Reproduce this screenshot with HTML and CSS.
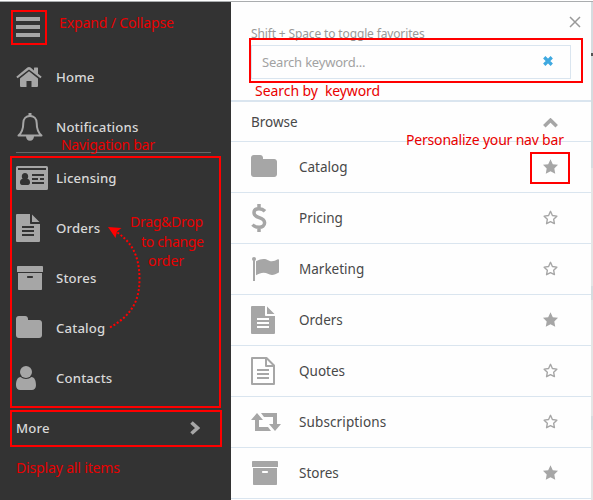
FILE: index.html
```html
<!DOCTYPE html>
<html lang="en">
<head>
<meta charset="utf-8">
<title>Navigation</title>
<link rel="stylesheet" href="styles.css">
</head>
<body>
<svg class="defs" width="0" height="0">
  <symbol id="home" viewBox="0 0 26 20"><path d="M13 4.200 22 11.600V19a1 1 0 0 1-1 1h-5.500v-6h-5v6H5a1 1 0 0 1-1-1v-7.400z"/><path d="M13 0c.7 0 1.100.2 1.600.6L18 3.400V1c0-.3.2-.5.5-.5h3c.3 0 .5.2.5.5v5.700l3.700 3.100-1.300 1.500L13 2.400 1.600 11.300.3 9.800 11.400.6c.5-.4.9-.6 1.600-.6z"/></symbol>
  <symbol id="bell" viewBox="0 0 26 28"><path fill="none" stroke="currentColor" stroke-width="2" stroke-linejoin="round" d="M13 3c-4 0-6.700 3-6.700 7 0 7-1.800 10-4.800 12.500h23c-3-2.500-4.800-5.500-4.800-12.500 0-4-2.700-7-6.700-7z"/><path d="M11.500 0h3v3h-3zM9 23h8c0 2.800-1.600 4.800-4 4.800S9 25.800 9 23z"/></symbol>
  <symbol id="card" viewBox="0 0 32 24"><path fill-rule="evenodd" d="M1.500 0h29A1.500 1.500 0 0 1 32 1.500v21a1.500 1.500 0 0 1-1.500 1.500h-29A1.500 1.500 0 0 1 0 22.500v-21A1.500 1.500 0 0 1 1.500 0zM2 2v2h28V2zM16 8v2h12V8zm0 4v2h6v-2zm8 0v2h4v-2zm-8 4v2h12v-2zM9 7c-2 0-3.200 1.600-3.200 3.400 0 1 .3 1.800.8 2.400C4.800 13 4 14.500 4 16.500 4 18 4.800 19 6 19h6c1.200 0 2-1 2-2.500 0-2-.8-3.500-2.600-3.700.5-.6.8-1.400.8-2.400C12.200 8.600 11 7 9 7z"/></symbol>
  <symbol id="file" viewBox="0 0 24 28"><path fill-rule="evenodd" d="M1 0h13v9c0 .6.4 1 1 1h9v17a1 1 0 0 1-1 1H1a1 1 0 0 1-1-1V1a1 1 0 0 1 1-1zm5 12v2h12v-2zm0 4v2h12v-2zm0 4v2h12v-2zM16 .5 23.500 8H16z"/></symbol>
  <symbol id="file-outline" viewBox="0 0 24 28"><path fill="none" stroke="currentColor" stroke-width="2" stroke-linejoin="round" d="M1 1h14.500L23 8.500V27H1zM15 1v8h8"/><path d="M6 12h12v2H6zM6 16h12v2H6zM6 20h12v2H6z"/></symbol>
  <symbol id="archive" viewBox="0 0 26 24"><path fill-rule="evenodd" d="M.8 0h24.400c.5 0 .8.300.8.800V6H0V.8C0 .3.300 0 .8 0zM1 7h24v16.200c0 .5-.3.800-.8.800H1.800c-.5 0-.8-.3-.8-.8zm10 3c-.6 0-1 .4-1 1s.4 1 1 1h4c.6 0 1-.4 1-1s-.4-1-1-1z"/></symbol>
  <symbol id="folder" viewBox="0 0 26 22"><path d="M26 6.800v12.400c0 1.600-1.200 2.800-2.800 2.800H2.800C1.200 22 0 20.800 0 19.200V2.800C0 1.200 1.200 0 2.800 0h6.400C10.800 0 12 1.200 12 2.800V4h11.200C24.800 4 26 5.200 26 6.800z"/></symbol>
  <symbol id="user" viewBox="0 0 20 24"><circle cx="10" cy="6" r="6"/><path d="M4.600 11C1.200 11.300 0 15 0 19.200 0 22.200 1.800 24 4.200 24h11.600c2.400 0 4.200-1.800 4.200-4.800 0-4.200-1.200-7.900-4.600-8.200C14 12.300 12 13 10 13s-4-.7-5.400-2z"/></symbol>
  <symbol id="dollar" viewBox="0 0 16 28"><path fill="none" stroke="currentColor" stroke-width="3.500" d="M14 7.200C12.300 5.500 10.200 4.700 8 4.700c-3 0-5 1.500-5 4C3 15 13.600 12.300 13.600 18.800c0 2.900-2.300 4.500-5.400 4.500-2.700 0-5-.9-6.700-2.700M8 0v5M8 23v5"/></symbol>
  <symbol id="flag" viewBox="0 0 28 24"><circle cx="3" cy="2" r="2"/><path d="M2 2h2v22H2zM5 4.300C8 2.700 10.300 2 12.500 2c4 0 5.200 2.300 8.300 2.300 2 0 4-1 6-2 .7-.3 1.200 0 1.200.6v12c0 .4-.2.700-.6.900-2 1.100-4.200 2.100-6.400 2.100-3.400 0-4.800-2.200-8.500-2.200-2.500 0-4.700 1-7.500 2.500z"/></symbol>
  <symbol id="retweet" viewBox="0 0 30 18"><path d="M6 0 12 7H8v7h9l3 4H4V7H0zM10 0h16v11h4l-6 7-6-7h4V4h-9z"/></symbol>
  <symbol id="star" viewBox="0 0 26 26"><path d="M13 .3 17 8.900l9 1.200-6.400 6.300 1.600 9L13 21.100l-8.200 4.300 1.600-9L0 10.100l9-1.200z"/></symbol>
  <symbol id="star-o" viewBox="0 0 26 26"><path fill="none" stroke="currentColor" stroke-width="2.400" stroke-linejoin="round" d="M13 2.300 16.300 9.500l7.700 1.200-5.500 5.400 1.300 7.600L13 20.100l-6.800 3.600 1.300-7.600L2 10.700l7.700-1.200z"/></symbol>
</svg>
<div class="app">
  <nav class="sidebar">
    <div class="burger"><i></i><i></i><i></i></div>
    <div class="item"><svg class="w26 h20"><use href="#home"/></svg><span>Home</span></div>
    <div class="item"><svg class="w26 h28 inset"><use href="#bell"/></svg><span>Notifications</span></div>
    <hr>
    <div class="item"><svg class="w32 h24"><use href="#card"/></svg><span>Licensing</span></div>
    <div class="item"><svg class="w24 h28"><use href="#file"/></svg><span>Orders</span></div>
    <div class="item"><svg class="w26 h24 inset"><use href="#archive"/></svg><span>Stores</span></div>
    <div class="item"><svg class="w26 h22 raise"><use href="#folder"/></svg><span>Catalog</span></div>
    <div class="item"><svg class="w20 h24"><use href="#user"/></svg><span>Contacts</span></div>
    <div class="item more"><span>More</span><svg class="next" viewBox="0 0 10 14"><path d="m1.500 1.500 6 5.500-6 5.500"/></svg></div>
  </nav>
  <main class="panel">
    <header class="search">
      <svg class="close" viewBox="0 0 10 10"><path d="m0 0 10 10M10 0 0 10"/></svg>
      <div class="hint">Shift + Space to toggle favorites</div>
      <div class="field"><span>Search keyword...</span><svg class="clear" viewBox="0 0 8 8"><path d="m1 1 6 6M7 1 1 7"/></svg></div>
    </header>
    <div class="browse"><span>Browse</span><svg class="up" viewBox="0 0 15 10"><path d="m1.300 8.200 6.200-6 6.200 6"/></svg></div>
    <div class="row"><div class="pic"><svg class="w26 h22 raise"><use href="#folder"/></svg></div><span>Catalog</span><svg class="star"><use href="#star"/></svg></div>
    <div class="row"><div class="pic"><svg class="w16 h28"><use href="#dollar"/></svg></div><span>Pricing</span><svg class="star"><use href="#star-o"/></svg></div>
    <div class="row"><div class="pic"><svg class="w28 h24"><use href="#flag"/></svg></div><span>Marketing</span><svg class="star"><use href="#star-o"/></svg></div>
    <div class="row"><div class="pic"><svg class="w24 h28"><use href="#file"/></svg></div><span>Orders</span><svg class="star"><use href="#star"/></svg></div>
    <div class="row"><div class="pic"><svg class="w24 h28"><use href="#file-outline"/></svg></div><span>Quotes</span><svg class="star"><use href="#star-o"/></svg></div>
    <div class="row"><div class="pic"><svg class="w30 h18"><use href="#retweet"/></svg></div><span class="wide">Subscriptions</span><svg class="star"><use href="#star-o"/></svg></div>
    <div class="row"><div class="pic"><svg class="w26 h24 inset"><use href="#archive"/></svg></div><span>Stores</span><svg class="star"><use href="#star"/></svg></div>
  </main>
  <div class="edge"></div>
</div>
<svg class="notes" width="593" height="500" viewBox="0 0 593 500">
  <g class="boxes">
    <rect x="12" y="11" width="34" height="33"/>
    <rect x="11" y="157" width="209" height="250"/>
    <rect x="11" y="411" width="210" height="35"/>
    <rect x="250" y="39" width="332" height="43"/>
    <rect x="531" y="153" width="38" height="30"/>
  </g>
  <path class="drag" d="M110 327.500C130 316 139.500 303 139.500 279 139.500 255 131 241 115 231"/>
  <path d="m108 227 13.500 1-4.500 3.500-1.500 6.500z"/>
  <text x="59" y="28" textLength="115">Expand / Collapse</text>
  <text x="61" y="150" textLength="94">Navigation bar</text>
  <text x="130" y="227" textLength="73">Drag&amp;Drop</text>
  <text x="141" y="247" textLength="63">to change</text>
  <text x="148" y="266" textLength="36">order</text>
  <text x="16" y="473" textLength="104">Display all items</text>
  <text x="255" y="96" textLength="63">Search by</text>
  <text x="325" y="96" textLength="55">keyword</text>
  <text x="406" y="145" textLength="158">Personalize your nav bar</text>
</svg>
</body>
</html>
```
FILE: styles.css
```css
* { box-sizing: border-box; }
body { margin: 0; width: 593px; height: 500px; overflow: hidden; background: #fff; font-family: "Noto Sans", "Open Sans", sans-serif; font-size: 13.5px; }
.defs { position: absolute; }
svg { display: block; flex: none; fill: currentColor; }
.app { display: flex; height: 499px; margin-top: 1px; border-top: 1px solid #aaadaf; }
.sidebar { width: 231px; background: #333; color: #a6a6a6; padding: 15px 20px 0 16px; flex: none; }
.burger { display: flex; flex-direction: column; gap: 4px; height: 35px; }
.burger i { width: 24px; height: 4px; background: #a6a6a6; }
.item { display: flex; align-items: center; height: 50px; }
.item span { margin-left: auto; width: 155px; color: #d8d8d8; font-weight: 500; font-size: 13.2px; letter-spacing: .15px; white-space: nowrap; }
.item.more span { margin: 0; }
.more { justify-content: space-between; padding-right: 11px; }
hr { margin: 0; border: 0; height: 1px; background: #666; }
.inset { margin-left: 1px; }
.raise { margin-bottom: 2px; }
.w16 { width: 16px; } .w20 { width: 20px; } .w24 { width: 24px; } .w26 { width: 26px; } .w28 { width: 28px; } .w30 { width: 30px; } .w32 { width: 32px; }
.h18 { height: 18px; } .h20 { height: 20px; } .h22 { height: 22px; } .h24 { height: 24px; } .h28 { height: 28px; }
.next { width: 10px; height: 14px; }
.next path, .up path { fill: none; stroke: #a6a6a6; stroke-width: 3.6; }
.panel { width: 360px; background: #fefefe; color: #a6a6a6; flex: none; }
.search { height: 100px; border-bottom: 2px solid #dae5ef; padding: 15px 20px 0; }
.close { width: 10px; height: 10px; margin: 0 -9px 0 auto; overflow: visible; }
.close path { fill: none; stroke: #999; stroke-width: 1.5; }
.hint { height: 18px; line-height: 13px; font-size: 12px; color: #999; white-space: nowrap; letter-spacing: -.14px; }
.field { display: flex; align-items: center; justify-content: space-between; height: 34px; border: 1px solid #dae5ef; padding: 0 17px 2px 10px; font-size: 13px; letter-spacing: -.2px; color: #a2a2a2; }
.field span { padding-top: 2px; }
.clear { width: 10px; height: 10px; }
.clear path { stroke: #3fa9e0; stroke-width: 2.6; }
.browse, .row { display: flex; align-items: center; padding: 0 33px 0 20px; border-bottom: 1px solid #dae5ef; color: #484848; }
.browse { height: 40px; justify-content: space-between; }
.up { width: 15px; height: 10px; margin-top: 2px; }
.row { height: 51px; }
.row svg { color: #a6a6a6; }
.row .star { width: 15px; height: 15px; margin: 0 0 2px auto; }
.wide { letter-spacing: .12px; }
.pic { width: 48px; }
.edge { width: 2px; background: linear-gradient(#d5dcdf 0 51px, #555 51px 54px, #d5dcdf 54px 166px, #e4e5e5 166px 284px, #d5dcdf 284px 298px, #e4e5e5 298px 414px, #d5dcdf 414px 428px, #e4e5e5 428px); }
.notes { position: absolute; left: 0; top: 0; fill: #f00; font: 14px "Noto Sans", "Open Sans", sans-serif; }
.boxes rect { fill: none; stroke: #f00; stroke-width: 2; }
.notes text { fill: #e90000; }
.drag { fill: none; stroke: #f00; stroke-width: 2; stroke-dasharray: 2 2; }
```
